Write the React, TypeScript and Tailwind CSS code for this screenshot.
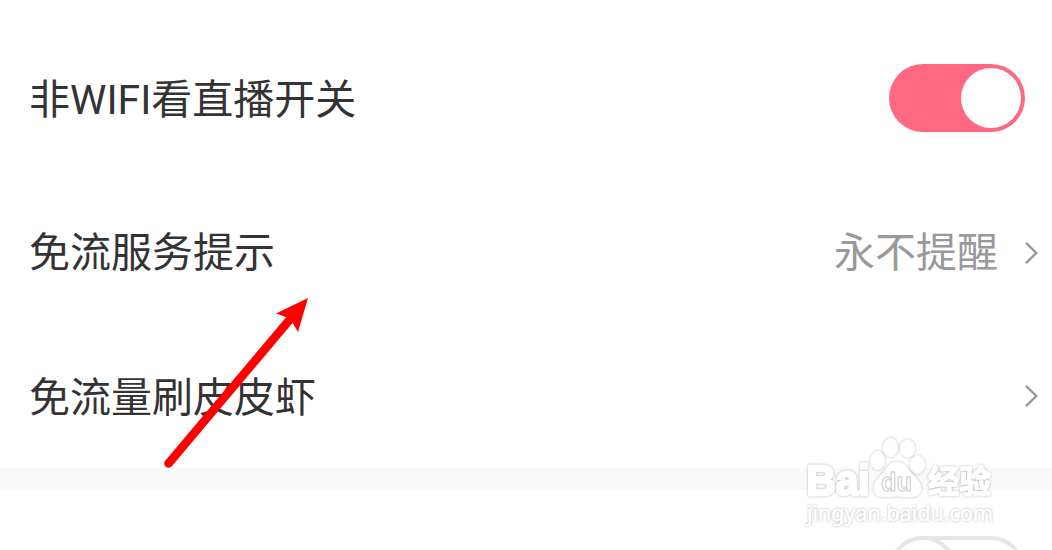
import clsx from 'clsx';
import { useState, type ReactNode } from 'react';

type RowProps = {
  label: string;
  labelClassName?: string;
  className: string;
  children: ReactNode;
};

function SettingRow({ label, labelClassName = 'pt-[3px]', className, children }: RowProps) {
  return (
    <div className={clsx('flex items-center justify-between pl-[29px]', className)}>
      <span className={clsx('text-[#333333]', labelClassName)}>{label}</span>
      {children}
    </div>
  );
}

function Toggle({ initial, label }: { initial: boolean; label: string }) {
  const [on, setOn] = useState(initial);

  return (
    <button
      type="button"
      role="switch"
      aria-checked={on}
      aria-label={label}
      onClick={() => setOn(!on)}
      className={clsx(
        'mr-[27px] flex h-[68px] w-[136px] shrink-0 items-center rounded-[34px]',
        on ? 'justify-end bg-[#ff6881] p-1' : 'justify-start bg-white ring-4 ring-[#e5e5ea] ring-inset',
      )}
    >
      <span
        className={clsx(
          'rounded-full bg-white',
          on ? 'size-[60px]' : 'size-[68px] border-4 border-[#e5e5ea]',
        )}
      />
    </button>
  );
}

function Chevron() {
  return (
    <svg
      className="mr-[13px] h-6 w-[15px] shrink-0"
      viewBox="0 0 15 24"
      fill="none"
      stroke="#999999"
      strokeWidth="2.4"
      aria-hidden="true"
    >
      <path d="M2 1.8 L12.3 12 L2 22.2" />
    </svg>
  );
}

function Arrow() {
  return (
    <svg
      className="pointer-events-none absolute top-[290px] left-[155px]"
      width="160"
      height="185"
      viewBox="155 290 160 185"
      aria-hidden="true"
    >
      <path d="M168.5 463.5 L289 320.5" stroke="#ff0000" strokeWidth="8.6" strokeLinecap="round" />
      <path d="M308 298 L276 313.5 L286 317 L292.5 322.5 L298 332 Z" fill="#ff0000" />
    </svg>
  );
}

function Watermark() {
  return (
    <svg
      className="pointer-events-none absolute top-[430px] left-[795px] drop-shadow-[0_0_1px_rgba(0,0,0,0.3)]"
      width="210"
      height="105"
      viewBox="795 430 210 105"
      fill="#ffffff"
      stroke="#ffffff"
      strokeLinejoin="round"
      fontFamily="'Liberation Sans', 'Noto Sans CJK SC', sans-serif"
    >
      <text x="806.5" y="495" fontSize="42" fontWeight="700" strokeWidth="2.8" textLength="63" lengthAdjust="spacingAndGlyphs">
        Bai
      </text>
      <ellipse cx="877.5" cy="460.5" rx="7" ry="9.2" />
      <ellipse cx="890.5" cy="447.5" rx="7" ry="9.5" />
      <ellipse cx="907.5" cy="448.5" rx="7.2" ry="9" />
      <ellipse cx="917.5" cy="464.5" rx="7.2" ry="9" />
      <path d="M897 462 C904 462 907 467 910 472 C914 477 921 481 921 488 C921 494 917 497 911 497 C905 497 902 496 897 496 C892 496 889 497 884 497 C877 497 874 494 874 488 C874 481 880 477 884 472 C887 467 890 462 897 462 Z" />
      <text x="881" y="491" fontSize="26" fontWeight="700" stroke="#d4d4d4" strokeWidth="1.3" textLength="31" lengthAdjust="spacingAndGlyphs">
        du
      </text>
      <text x="928" y="492.5" fontSize="31.5" fontWeight="700" strokeWidth="1.4">
        经验
      </text>
      <text x="807" y="521" fontSize="21" strokeWidth="0.6" fontFamily="'Noto Sans', sans-serif" textLength="186" lengthAdjust="spacingAndGlyphs">
        jingyan.baidu.com
      </text>
    </svg>
  );
}

export default function App() {
  return (
    <main className="relative flex h-[550px] w-[1052px] flex-col overflow-hidden bg-white font-[Roboto,'Noto_Sans_CJK_SC',sans-serif] text-[41px] leading-[60px]">
      <SettingRow label="非WIFI看直播开关" className="mt-[25px] h-[146px] shrink-0">
        <Toggle initial label="非WIFI看直播开关" />
      </SettingRow>
      <SettingRow label="免流服务提示" labelClassName="pt-px" className="h-[163px] shrink-0">
        <div className="flex items-center gap-[26px]">
          <span className="pt-px text-[#999999]">永不提醒</span>
          <Chevron />
        </div>
      </SettingRow>
      <SettingRow label="免流量刷皮皮虾" className="h-[124px] shrink-0">
        <Chevron />
      </SettingRow>
      <div className="mt-[10px] h-[22px] shrink-0 bg-[#f9f9f9]" />
      <div className="flex shrink-0 justify-end pt-[46px]">
        <Toggle initial={false} label="开关" />
      </div>
      <Arrow />
      <Watermark />
    </main>
  );
}
